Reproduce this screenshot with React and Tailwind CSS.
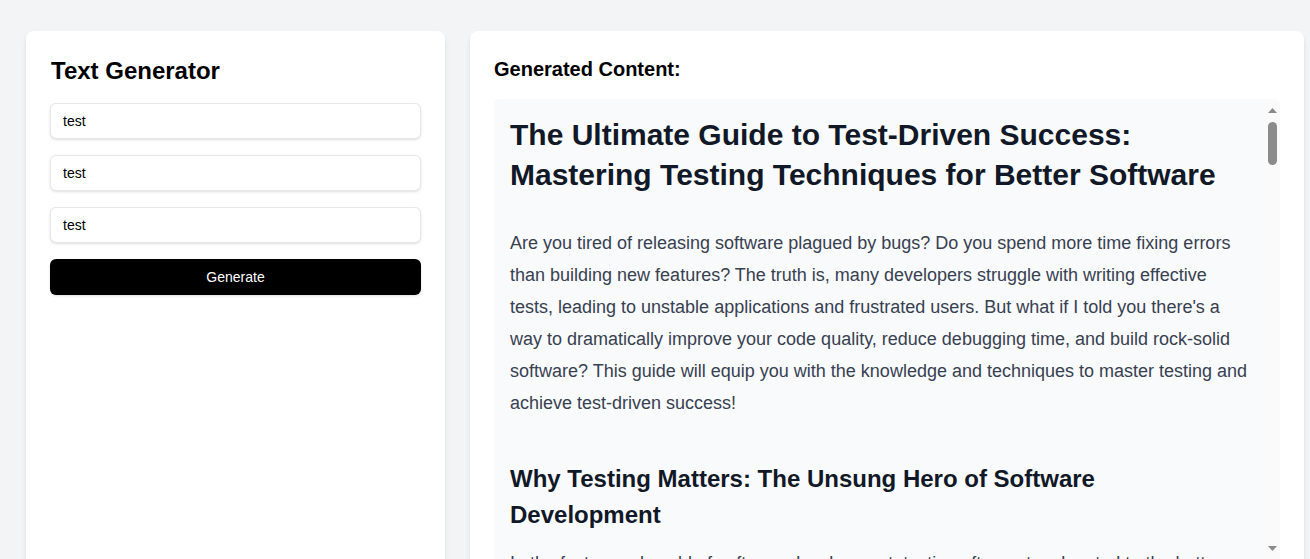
import React from "react";

export default function App() {
  return (
    <div
      className="min-h-screen bg-[#f3f4f6] pl-[26px] pt-[31px] flex gap-[25px] items-stretch"
      style={{ fontFamily: '"Liberation Sans", Arial, sans-serif' }}
    >
      <div className="w-[419px] shrink-0 bg-white rounded-lg shadow-md p-6 min-h-[600px]">
        <h1 className="text-2xl leading-8 font-bold text-black mb-4 pl-px">Text Generator</h1>
        <div className="flex flex-col gap-4">
          <input
            defaultValue="test"
            className="h-9 w-full px-3 text-sm text-black border border-[#e5e7eb] rounded-md shadow-sm outline-none bg-white"
          />
          <input
            defaultValue="test"
            className="h-9 w-full px-3 text-sm text-black border border-[#e5e7eb] rounded-md shadow-sm outline-none bg-white"
          />
          <input
            defaultValue="test"
            className="h-9 w-full px-3 text-sm text-black border border-[#e5e7eb] rounded-md shadow-sm outline-none bg-white"
          />
          <button className="h-9 w-full bg-black text-white text-sm rounded-md shadow-sm">
            Generate
          </button>
        </div>
      </div>

      <div className="w-[834px] shrink-0 bg-white rounded-lg shadow-md p-6">
        <h2 className="text-xl leading-7 font-bold text-black mb-4">Generated Content:</h2>
        <div className="h-[470px] flex bg-[#f9fafb] rounded-md overflow-hidden">
          <div className="flex-1 min-w-0 p-4 overflow-hidden">
            <h1 className="text-[30px] leading-[40px] font-bold text-[#111827] mb-8">
              The Ultimate Guide to Test-Driven Success: Mastering Testing Techniques for Better Software
            </h1>
            <p className="text-[18px] leading-[32px] text-[#374151]">
              Are you tired of releasing software plagued by bugs? Do you spend more time fixing errors
              than building new features? The truth is, many developers struggle with writing effective
              tests, leading to unstable applications and frustrated users. But what if I told you there's a
              way to dramatically improve your code quality, reduce debugging time, and build rock-solid
              software? This guide will equip you with the knowledge and techniques to master testing and
              achieve test-driven success!
            </p>
            <h2 className="text-[24px] leading-[36px] font-bold text-[#111827] mt-[42px] mb-[14px]">
              Why Testing Matters: The Unsung Hero of Software Development
            </h2>
            <p className="text-[18px] leading-[32px] text-[#374151]">
              In the fast-paced world of software development, testing often gets relegated to the bottom
              of the priority list. Deadlines loom, features need shipping, and writing tests can feel like
              a chore that slows you down. But skipping tests is a false economy.
            </p>
          </div>
          <div className="w-[15px] shrink-0 bg-[#fafafa] flex flex-col items-center pt-[9px] pb-[18px]">
            <svg width="9" height="5" viewBox="0 0 9 5" className="shrink-0">
              <path d="M4.5 0 L9 5 L0 5 Z" fill="#8b8b8b" />
            </svg>
            <div className="mt-[9px] w-[9px] h-[43px] rounded-full bg-[#8b8b8b] shrink-0" />
            <div className="flex-1" />
            <svg width="9" height="5" viewBox="0 0 9 5" className="shrink-0">
              <path d="M0 0 L9 0 L4.5 5 Z" fill="#8b8b8b" />
            </svg>
          </div>
        </div>
      </div>
    </div>
  );
}
